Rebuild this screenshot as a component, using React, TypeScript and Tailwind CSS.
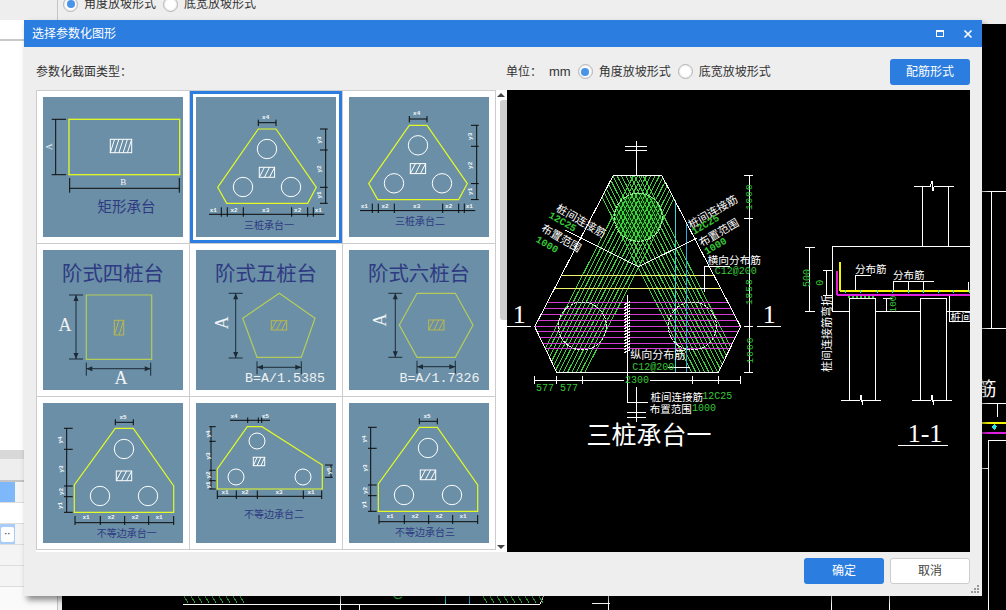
// App.tsx
import type { ReactNode } from "react";

type Seg = [number, number, number, number];

const Lines = ({ segs, stroke = "#fff", width = 1 }: { segs: Seg[]; stroke?: string; width?: number }) => (
	<g stroke={stroke} strokeWidth={width} fill="none">
		{segs.map(([x1, y1, x2, y2], i) => (
			<line key={i} x1={x1} y1={y1} x2={x2} y2={y2} />
		))}
	</g>
);

interface TxtProps {
	x: number;
	y: number;
	size: number;
	fill?: string;
	rotate?: number;
	mono?: boolean;
	serif?: boolean;
	bold?: boolean;
	spacing?: number;
	children: ReactNode;
}

const Txt = ({ x, y, size, fill = "#fff", rotate = 0, mono, serif, bold, spacing, children }: TxtProps) => (
	<text
		x={x}
		y={y}
		fontSize={size}
		fill={fill}
		textAnchor="middle"
		dominantBaseline="central"
		letterSpacing={spacing}
		fontWeight={bold ? 700 : 400}
		fontFamily={
			mono
				? "'Liberation Mono', monospace"
				: serif
					? "'Liberation Serif', 'Noto Sans CJK SC', serif"
					: "'Noto Sans CJK SC', sans-serif"
		}
		transform={rotate ? `rotate(${rotate} ${x} ${y})` : undefined}
	>
		{children}
	</text>
);

const Hatch = ({ x, y, w, h, color = "#fff" }: { x: number; y: number; w: number; h: number; color?: string }) => {
	const n = Math.round(w / 4.5);
	const step = w / n;
	return (
		<g stroke={color} fill="none" strokeWidth={1}>
			<rect x={x} y={y} width={w} height={h} />
			{Array.from({ length: n }, (_, i) => (
				<line key={i} x1={x + i * step} y1={y + h} x2={x + (i + 1) * step} y2={y} />
			))}
		</g>
	);
};

const Thumb = ({ children }: { children: ReactNode }) => (
	<svg viewBox="0 0 140 140" className="block h-[140px] w-[140px] bg-[#6b8fa6]">
		{children}
	</svg>
);

const Lbl = (props: { x: number; y: number; rotate?: number; children: ReactNode }) => (
	<Txt {...props} size={6} mono bold fill="#f4f7f8" />
);

const Title = ({ x, y, size = 10, children }: { x: number; y: number; size?: number; children: ReactNode }) => (
	<Txt x={x} y={y} size={size} fill="#2e3a82">
		{children}
	</Txt>
);

const YELLOW = "#e2fa26";

const RectCap = () => (
	<Thumb>
		<rect x={26} y={22.3} width={110.7} height={55.4} fill="none" stroke={YELLOW} strokeWidth={1.3} />
		<Hatch x={67.3} y={42.3} w={21.4} h={13.4} />
		<Lines
			stroke="#0c0c0c"
			segs={[
				[12.7, 22.3, 12.7, 77.7],
				[8.7, 22.3, 23, 22.3],
				[8.7, 77.7, 23, 77.7],
				[26.7, 91.3, 136.3, 91.3],
				[26.7, 81, 26.7, 95.7],
				[136.3, 81, 136.3, 95.7],
			]}
		/>
		<Txt x={6.3} y={49.7} size={9} rotate={-90} serif fill="#f4f7f8">
			A
		</Txt>
		<Txt x={80.3} y={84.7} size={9} serif fill="#f4f7f8">
			B
		</Txt>
		<Title x={83.5} y={108.7} size={14.5}>
			矩形承台
		</Title>
	</Thumb>
);

// 三桩承台一 / 二 share one drawing, only shifted
const ThreePile = ({ dx, dy, title }: { dx: number; dy: number; title: string }) => (
	<Thumb>
		<g transform={`translate(${dx} ${dy})`}>
			<polygon
				points="62.3,32 80,32 120.3,90.3 111.7,106.3 30.7,106.3 21.7,90.3"
				fill="none"
				stroke={YELLOW}
				strokeWidth={1.2}
			/>
			<g fill="none" stroke="#fff">
				<circle cx={71} cy={52} r={9.7} />
				<circle cx={47} cy={90} r={9.7} />
				<circle cx={95} cy={90} r={9.7} />
			</g>
			<Hatch x={63.3} y={70.3} w={15.3} h={10} />
			<Lines
				stroke="#0c0c0c"
				segs={[
					[62.3, 25.7, 80, 25.7],
					[62.3, 22.7, 62.3, 29],
					[80, 22.7, 80, 29],
					[129.7, 32, 129.7, 106.3],
					[124, 32, 131.7, 32],
					[124, 53, 131.7, 53],
					[124, 90.3, 131.7, 90.3],
					[124, 106.3, 131.7, 106.3],
					[13, 117.3, 128.3, 117.3],
					...[25.3, 31.3, 47.3, 95.7, 111.7, 117.3].map((x): Seg => [x, 110.3, x, 119.7]),
				]}
			/>
			<Lbl x={69.7} y={20.3}>x4</Lbl>
			<Lbl x={123} y={43} rotate={-90}>y3</Lbl>
			<Lbl x={123} y={72} rotate={-90}>y2</Lbl>
			<Lbl x={123} y={98} rotate={-90}>y1</Lbl>
			<Lbl x={17.3} y={113}>x1</Lbl>
			<Lbl x={38} y={113}>x2</Lbl>
			<Lbl x={69.7} y={113}>x3</Lbl>
			<Lbl x={101.7} y={113}>x2</Lbl>
			<Lbl x={122.3} y={113}>x1</Lbl>
			<Title x={73} y={127.3}>{title}</Title>
		</g>
	</Thumb>
);

const Arrow = ({ x, y, dir, color }: { x: number; y: number; dir: "u" | "d" | "l" | "r"; color: string }) => {
	const pts = {
		u: `${x},${y} ${x - 2.5},${y + 6} ${x + 2.5},${y + 6}`,
		d: `${x},${y} ${x - 2.5},${y - 6} ${x + 2.5},${y - 6}`,
		l: `${x},${y} ${x + 6},${y - 2.5} ${x + 6},${y + 2.5}`,
		r: `${x},${y} ${x - 6},${y - 2.5} ${x - 6},${y + 2.5}`,
	}[dir];
	return <polygon points={pts} fill={color} />;
};

const DIM = "#1d2b38";
const PALE = "#b3cc5c";
const HATCH_Y = "#b9b84f";

const PlainShape = ({
	title,
	points,
	hatch,
	v,
	h,
	a,
	formula,
}: {
	title: string;
	points: string;
	hatch: [number, number, number, number];
	v: { x: number; y1: number; y2: number };
	h: { y: number; x1: number; x2: number };
	a: { x: number; y: number; rotate?: number };
	formula?: { x: number; y: number; text: string };
}) => (
	<Thumb>
		<Title x={70} y={21.7} size={20.4}>
			{title}
		</Title>
		<polygon points={points} fill="none" stroke={PALE} strokeWidth={1.2} />
		<Hatch x={hatch[0]} y={hatch[1]} w={hatch[2]} h={hatch[3]} color={HATCH_Y} />
		<Lines
			stroke={DIM}
			segs={[
				[v.x, v.y1, v.x, v.y2],
				[v.x - 7, v.y1, v.x + 7, v.y1],
				[v.x - 7, v.y2, v.x + 7, v.y2],
				[h.x1, h.y, h.x2, h.y],
				[h.x1, h.y - 6, h.x1, h.y + 7],
				[h.x2, h.y - 6, h.x2, h.y + 7],
			]}
		/>
		<Arrow x={v.x} y={v.y1} dir="u" color={DIM} />
		<Arrow x={v.x} y={v.y2} dir="d" color={DIM} />
		<Arrow x={h.x1} y={h.y} dir="l" color={DIM} />
		<Arrow x={h.x2} y={h.y} dir="r" color={DIM} />
		<Txt x={a.x} y={a.y} size={18} serif rotate={a.rotate} fill="#f1f4f6">
			A
		</Txt>
		{formula ? (
			<Txt x={formula.x} y={formula.y} size={13.3} mono fill="#eef2f5">
				{formula.text}
			</Txt>
		) : (
			<Txt x={78} y={128.3} size={18} serif fill="#f1f4f6">
				A
			</Txt>
		)}
	</Thumb>
);

const UnequalA = ({ dx, dy, title, tx, ty }: { dx: number; dy: number; title: string; tx: number; ty: number }) => (
	<Thumb>
		<g transform={`translate(${dx} ${dy})`}>
			<polygon
				points="72.3,25.3 90.3,25.3 130.7,83 130.7,109.3 31.3,109.3 31.3,82"
				fill="none"
				stroke={YELLOW}
				strokeWidth={1.2}
			/>
			<g fill="none" stroke="#fff">
				<circle cx={81} cy={46} r={9.7} />
				<circle cx={57} cy={93} r={9.7} />
				<circle cx={105} cy={93} r={9.7} />
			</g>
			<Hatch x={73.3} y={68} w={15.4} h={9.7} />
			<Lines
				stroke="#0c0c0c"
				segs={[
					[23.7, 25.3, 23.7, 109.3],
					...[25.3, 46.3, 83, 93.7, 109.3].map((y): Seg => [21, y, 29.7, y]),
					[72.3, 19.3, 90.3, 19.3],
					[72.3, 16.3, 72.3, 22.3],
					[90.3, 16.3, 90.3, 22.3],
					[32, 119.7, 130.7, 119.7],
					...[32, 57.3, 81.7, 105.7, 130.7].map((x): Seg => [x, 113, x, 122]),
				]}
			/>
			<Lbl x={80} y={14.7}>x5</Lbl>
			<Lbl x={17.3} y={37} rotate={-90}>y4</Lbl>
			<Lbl x={18} y={66} rotate={-90}>y3</Lbl>
			<Lbl x={18} y={88.5} rotate={-90}>y2</Lbl>
			<Lbl x={17.3} y={102.5} rotate={-90}>y1</Lbl>
			<Lbl x={43} y={114.7}>x1</Lbl>
			<Lbl x={68} y={114.7}>x2</Lbl>
			<Lbl x={92} y={114.7}>x2</Lbl>
			<Lbl x={116} y={114.7}>x1</Lbl>
		</g>
		<Title x={tx} y={ty}>{title}</Title>
	</Thumb>
);

const UnequalB = () => (
	<Thumb>
		<polygon
			points="51.3,23.7 66,23.7 126.3,62 126.3,86 21.3,86 21.3,66"
			fill="none"
			stroke={YELLOW}
			strokeWidth={1.2}
		/>
		<g fill="none" stroke="#fff">
			<circle cx={61} cy={38} r={8} />
			<circle cx={40} cy={74} r={8} />
			<circle cx={107} cy={74} r={8} />
		</g>
		<Hatch x={57.3} y={54.3} w={11.4} h={8.4} />
		<Lines
			stroke="#0c0c0c"
			segs={[
				[15, 23.7, 15, 86],
				...[23.7, 38.3, 67.3, 77.7, 86].map((y): Seg => [13.3, y, 19.7, y]),
				[34, 17.3, 74, 17.3],
				...[51.7, 62.3, 65.7].map((x): Seg => [x, 14.5, x, 20]),
				[135, 62, 135, 74.3],
				[129, 62, 136.7, 62],
				[129, 74.3, 136.7, 74.3],
				[21.3, 93.3, 125.7, 93.3],
				...[21.3, 40.3, 61.3, 107.3, 125.7].map((x): Seg => [x, 87.5, x, 96]),
			]}
		/>
		<Lbl x={38} y={13}>x4</Lbl>
		<Lbl x={69.3} y={13}>x5</Lbl>
		<Lbl x={133} y={68} rotate={-90}>y5</Lbl>
		<Lbl x={12} y={31} rotate={-90}>y4</Lbl>
		<Lbl x={12} y={53} rotate={-90}>y3</Lbl>
		<Lbl x={12} y={72} rotate={-90}>y2</Lbl>
		<Lbl x={12} y={82} rotate={-90}>y1</Lbl>
		<Lbl x={29} y={89.3}>x1</Lbl>
		<Lbl x={49} y={89.3}>x2</Lbl>
		<Lbl x={83} y={89.3}>x3</Lbl>
		<Lbl x={115} y={89.3}>x1</Lbl>
		<Title x={78} y={110.3}>不等边承台二</Title>
	</Thumb>
);

const thumbs: { id: string; node: ReactNode; selected?: boolean }[] = [
	{ id: "rect", node: <RectCap /> },
	{ id: "three1", node: <ThreePile dx={0} dy={0} title="三桩承台一" />, selected: true },
	{ id: "three2", node: <ThreePile dx={-2} dy={-3.7} title="三桩承台二" /> },
	{
		id: "four",
		node: (
			<PlainShape
				title="阶式四桩台"
				points="43.3,45 108.7,45 108.7,109.3 43.3,109.3"
				hatch={[71.3, 70.3, 9.4, 14.7]}
				v={{ x: 33, y1: 45, y2: 109 }}
				h={{ y: 118.7, x1: 43.3, x2: 107.7 }}
				a={{ x: 22, y: 74.7 }}
			/>
		),
	},
	{
		id: "five",
		node: (
			<PlainShape
				title="阶式五桩台"
				points="83.3,43.3 119,68.3 105.3,107.3 61,107.3 46.7,68.3"
				hatch={[75.3, 70.7, 15.4, 9.3]}
				v={{ x: 39.7, y1: 43.3, y2: 108 }}
				h={{ y: 117.3, x1: 61, x2: 105.3 }}
				a={{ x: 25.7, y: 72.7, rotate: -90 }}
				formula={{ x: 89, y: 128, text: "B=A/1.5385" }}
			/>
		),
	},
	{
		id: "six",
		node: (
			<PlainShape
				title="阶式六桩台"
				points="68,43.3 106.3,43.3 124,75 106.3,107.3 68,107.3 50.3,75"
				hatch={[79.7, 70, 15.3, 10]}
				v={{ x: 46.3, y1: 43.3, y2: 107.3 }}
				h={{ y: 116.7, x1: 68, x2: 106.3 }}
				a={{ x: 31, y: 70, rotate: -90 }}
				formula={{ x: 90.5, y: 128, text: "B=A/1.7326" }}
			/>
		),
	},
	{ id: "un1", node: <UnequalA dx={0} dy={0} title="不等边承台一" tx={83.7} ty={129.3} /> },
	{ id: "un2", node: <UnequalB /> },
	{ id: "un3", node: <UnequalA dx={-2} dy={-1} title="不等边承台三" tx={76} ty={128.7} /> },
];

const HEX = "613.3,175.3 661.7,175.3 740.7,326.7 718.3,372.3 556.7,372.3 534.7,326.7";
const offsets = Array.from({ length: 13 }, (_, i) => -26 + i * 4.33);
const bandB = offsets.map((k): Seg => [638.3 + k + 0.512 * 43, 174, 638.3 + k - 0.512 * 156, 373.3]);
const bandA = offsets.map((k): Seg => [638.3 + k - 0.512 * 43, 174, 638.3 + k + 0.512 * 156, 373.3]);
const magenta = [302.7, 308.3, 314, 320, 326, 331.7, 337.3, 343.3, 348.7].map((y): Seg => [530, y, 745, y]);
const zig = Array.from({ length: 17 }, (_, i): Seg => [624.5, 303 + i * 3 + 1.5, 630.5, 303 + i * 3 - 1.5]);

const GREEN = "#38c838";
const HATCH_GREEN = "#3fd23f";

const CadDrawing = () => (
	<svg viewBox="507 90 463 462" className="block h-[462px] w-[463px] bg-black">
		<defs>
			<clipPath id="hex">
				<polygon points={HEX} />
			</clipPath>
		</defs>
		<g shapeRendering="crispEdges">
			<g clipPath="url(#hex)">
				<Lines stroke={HATCH_GREEN} segs={bandB} />
				<Lines stroke={HATCH_GREEN} segs={bandA} />
				<circle cx={638.3} cy={217.3} r={24} fill="#2ed02e" fillOpacity={0.22} />
				<Lines stroke="#d43cd4" segs={magenta} />
			</g>
			<Lines
				stroke="#f4f46c"
				segs={[
					[561, 275.3, 713.6, 275.3],
					[554, 288.3, 721, 288.3],
				]}
			/>
			<Lines stroke="#30d8d8" segs={[[675.3, 200, 675.3, 372]]} />
			<Lines stroke="#2aa8e0" segs={[[686.7, 221.7, 686.7, 372]]} />
			<Lines
				segs={[
					[636.3, 141, 636.3, 175.3],
					[625, 146.7, 647, 146.7],
					[625, 150.7, 647, 150.7],
					[627.3, 295, 627.3, 402.3],
					[627.3, 402.3, 648.3, 402.3],
					[636.7, 386.7, 636.7, 421.7],
					[627, 412.7, 646, 412.7],
					[627, 417.7, 646, 417.7],
					[556.7, 372.3, 718.3, 372.3],
					[565, 230, 638.3, 266.7],
					[638.3, 266.7, 696.7, 238.3],
					[704, 266, 730, 266],
					[704, 266, 704, 291.7],
					[700, 275.3, 708, 275.3],
					[700, 288.3, 708, 288.3],
					[507, 326, 530.7, 326],
					[756.7, 326, 780.7, 326],
					[749.3, 175, 749.3, 373.3],
					[744.3, 175, 752.7, 175],
					[744.3, 218.7, 752.7, 218.7],
					[744.3, 326, 752.7, 326],
					[744.3, 372.7, 752.7, 372.7],
					[534.3, 380, 624, 380],
					[650, 380, 740.7, 380],
					...[534.3, 556, 582.3, 692.3, 718.3, 740].map((x): Seg => [x, 376, x, 384]),
					[668, 367.7, 690, 367.7],
					...zig,
				]}
			/>
			<polygon points={HEX} fill="none" stroke="#fff" />
			<g fill="none" stroke="#dff5df" strokeDasharray="3 1">
				<circle cx={582.3} cy={326} r={24} />
				<circle cx={692.3} cy={326} r={24} />
				<circle cx={638.3} cy={217.3} r={24} stroke="#9cf09c" />
			</g>

			{/* section 1-1 */}
			<Lines
				segs={[
					[914.3, 186.7, 930, 186.7],
					[934, 186.7, 954, 186.7],
					[930, 186.7, 932, 181],
					[932, 181, 933, 191],
					[933, 191, 934, 186.7],
					[922.7, 186.7, 922.7, 246.7],
					[948.7, 186.7, 948.7, 246.7],
					[832.3, 246.7, 970, 246.7],
					[832.3, 246.7, 832.3, 311.7],
					[832.3, 311.7, 849.3, 311.7],
					[875.7, 311.7, 920.7, 311.7],
					[946.7, 311.7, 970, 311.7],
					[805, 247.3, 815, 247.3],
					[805, 311.7, 815, 311.7],
					[809.3, 247.3, 809.3, 311.7],
					[826.7, 270.7, 826.7, 295],
					[823, 270.7, 832, 270.7],
					[823, 295, 832, 295],
					[849.3, 298.3, 875.7, 298.3],
					[849.3, 298.3, 849.3, 400],
					[875.7, 298.3, 875.7, 400],
					[920.7, 298.3, 946.7, 298.3],
					[920.7, 298.3, 920.7, 400],
					[946.7, 298.3, 946.7, 400],
					[841, 400.3, 860, 400.3],
					[863, 400.3, 881, 400.3],
					[860, 400.3, 861, 395],
					[861, 395, 862.5, 405],
					[862.5, 405, 863, 400.3],
					[912.3, 400.3, 931, 400.3],
					[934, 400.3, 952, 400.3],
					[931, 400.3, 932, 395],
					[932, 395, 933.5, 405],
					[933.5, 405, 934, 400.3],
					[855.7, 275, 870.7, 275],
					[855.7, 275, 855.7, 291],
					[893.3, 281.3, 934, 281.3],
					[893.3, 281.3, 893.3, 291],
					[908.3, 281.3, 908.3, 291],
					[923.3, 281.3, 923.3, 291],
					[886.7, 298.3, 886.7, 311.7],
					[883, 298.3, 892, 298.3],
					[883, 311.7, 892, 311.7],
					[949.3, 295, 949.3, 321.7],
					[949.3, 321.7, 970, 321.7],
					[898.3, 445.7, 947.7, 445.7],
					[968, 282, 968, 290],
				]}
			/>
			<Lines
				stroke="#f6f600"
				width={2}
				segs={[
					[840, 261.7, 840, 291],
					[840, 291, 970, 291],
				]}
			/>
			<Lines
				stroke="#e01fe0"
				width={2}
				segs={[
					[837, 271, 837, 294.7],
					[837, 294.7, 970, 294.7],
				]}
			/>
			<Lines
				stroke="#30e0e0"
				segs={[845, 860, 877, 892.5, 908.3, 923.3, 938.3, 953.3, 969].map((x): Seg => [x, 289.5, x, 292.5])}
			/>
			<line x1={848} y1={296.7} x2={876} y2={296.7} stroke={GREEN} strokeDasharray="2 2" strokeWidth={2} />
		</g>

		<Txt x={519.3} y={314} size={26} serif>1</Txt>
		<Txt x={769.3} y={314} size={26} serif>1</Txt>
		<Txt x={750} y={196.7} size={9.5} mono fill={GREEN} rotate={-90} spacing={1}>1000</Txt>
		<Txt x={750} y={291.7} size={9.5} mono fill={GREEN} rotate={-90} spacing={1}>1858</Txt>
		<Txt x={750} y={350} size={9.5} mono fill={GREEN} rotate={-90} spacing={1}>1000</Txt>

		<Txt x={581.7} y={220} size={11} rotate={30}>桩间连接筋</Txt>
		<Txt x={562.3} y={222.3} size={10} mono bold fill={GREEN} rotate={30}>12C25</Txt>
		<Txt x={561.7} y={237.3} size={11} rotate={30}>布置范围</Txt>
		<Txt x={546.7} y={245} size={10} mono bold fill={GREEN} rotate={30}>1000</Txt>
		<Txt x={712.3} y={211} size={11} rotate={-30}>桩间连接筋</Txt>
		<Txt x={705.7} y={225} size={10} mono bold fill={GREEN} rotate={-30}>12C25</Txt>
		<Txt x={718.3} y={231.7} size={11} rotate={-30}>布置范围</Txt>
		<Txt x={715.7} y={246.7} size={10} mono bold fill={GREEN} rotate={-30}>1000</Txt>

		<Txt x={734.3} y={259.3} size={10.7}>横向分布筋</Txt>
		<Txt x={735.7} y={271.7} size={10} mono fill={GREEN}>C12@200</Txt>
		<Txt x={657.7} y={354.3} size={11}>纵向分布筋</Txt>
		<Txt x={653.3} y={367.7} size={10} mono fill={GREEN}>C12@200</Txt>
		<Txt x={637} y={380.3} size={10} mono fill={GREEN}>2300</Txt>
		<Txt x={557} y={388.7} size={10} mono fill={GREEN}>577 577</Txt>
		<Txt x={676.7} y={396} size={10.5}>桩间连接筋</Txt>
		<Txt x={717.3} y={396.7} size={10} mono fill={GREEN}>12C25</Txt>
		<Txt x={670.7} y={408.3} size={10.5}>布置范围</Txt>
		<Txt x={704} y={408.3} size={10} mono fill={GREEN}>1000</Txt>
		<Txt x={649} y={433.3} size={25}>三桩承台一</Txt>

		<Txt x={807.3} y={278} size={10} mono fill={GREEN} rotate={-90}>500</Txt>
		<Txt x={820.7} y={282.7} size={10} mono fill={GREEN} rotate={-90}>0</Txt>
		<Txt x={826} y={333.5} size={11} rotate={-90}>桩间连接筋弯折</Txt>
		<Txt x={870.7} y={268.3} size={10.5}>分布筋</Txt>
		<Txt x={908.7} y={274.3} size={10.5}>分布筋</Txt>
		<Txt x={893.3} y={304} size={9.5} mono fill={GREEN} rotate={-90}>100</Txt>
		<Txt x={961} y={316.5} size={10.5}>桩间</Txt>
		<Txt x={925} y={433} size={26} serif>1-1</Txt>
	</svg>
);

const BackgroundCad = () => (
	<svg viewBox="62 24 944 586" className="block h-full w-full">
		<g shapeRendering="crispEdges">
			<Lines
				segs={[
					[183, 604, 540, 604],
					[540, 604, 544, 595],
					[340, 596, 340, 610],
					[359, 604, 359, 610],
					[592, 603, 610, 603],
					[608, 596, 608, 610],
					[831.7, 596, 831.7, 610],
					[889.3, 596, 889.3, 610],
					[982, 191.7, 1006, 191.7],
					[991.7, 191.7, 991.7, 328.3],
					[982, 328.3, 1006, 328.3],
					[982, 403.3, 1006, 403.3],
					[998, 403.3, 997, 417],
					[988.3, 440.7, 1006, 440.7],
					[988.3, 440.7, 988.3, 610],
					[982, 468.7, 988.3, 468.7],
				]}
			/>
			<Lines
				stroke="#35b835"
				segs={[
					...Array.from({ length: 9 }, (_, i): Seg => [184 + i * 7, 596, 188 + i * 7, 603]),
					...Array.from({ length: 9 }, (_, i): Seg => [483 + i * 7, 596, 487 + i * 7, 603]),
				]}
			/>
			<Lines stroke="#30d8d8" segs={[[445.3, 596, 445.3, 604]]} />
			<Lines stroke="#2aa8e0" segs={[[469, 596, 469, 604]]} />
			<Lines stroke="#f6f600" width={2} segs={[[982, 423, 1006, 423]]} />
			<Lines stroke="#e01fe0" width={2} segs={[[982, 432.7, 1006, 432.7]]} />
			<polygon points="994.3,424 997,426.7 994.3,430 991.6,426.7" fill="#30e0e0" />
		</g>
		<Txt x={987} y={387} size={19}>筋</Txt>
		<Txt x={398} y={590} size={20} mono fill="#38c838">C12@200</Txt>
	</svg>
);

const Radio = ({ checked }: { checked?: boolean }) => (
	<span className="flex h-[15px] w-[15px] items-center justify-center rounded-full border border-[#b4b4b4] bg-white shadow-[inset_0_0_2px_#ccc]">
		{checked && <span className="h-[8px] w-[8px] rounded-full bg-[#4a94e8]" />}
	</span>
);

const SlopeOptions = () => (
	<>
		<Radio checked />
		<span className="ml-[6px]">角度放坡形式</span>
		<span className="ml-[7px]">
			<Radio />
		</span>
		<span className="ml-[6px]">底宽放坡形式</span>
	</>
);

const SidePanel = () => (
	<aside className="flex w-[57px] shrink-0 flex-col bg-white">
		<div className="h-5 bg-[#eee]" />
		<div className="h-[21px] border-b-2 border-[#c9c9c9]" />
		<div className="flex-1" />
		<div className="h-[9px] bg-[#d8d8d8]" />
		<div className="h-[23px] border-b-2 border-[#c4c4c4] bg-[#eee]" />
		<div className="flex h-[21px] border-b border-[#ddd]">
			<div className="w-[15px] bg-[#7fb7fb]" />
			<div className="flex-1 bg-[#f4f4f4]" />
		</div>
		<div className="h-[21px] border-b border-[#ddd]" />
		<div className="flex h-[21px] border-b border-[#ddd]">
			<div className="flex w-[15px] items-center justify-center bg-[#a9cdf8]">
				<span className="flex h-[15px] w-[13px] items-center justify-center rounded-[2px] bg-white text-[9px] font-bold leading-none text-[#555]">
					··
				</span>
			</div>
			<div className="flex-1 bg-[#f4f4f4]" />
		</div>
		<div className="h-[21px] border-b border-[#ddd] bg-[#f4f4f4]" />
		<div className="h-[21px] border-b border-[#ddd] bg-[#f4f4f4]" />
		<div className="h-[23px] bg-[#fafafa]" />
	</aside>
);

const Scrollbar = () => (
	<div className="flex w-[11px] shrink-0 flex-col bg-white">
		<svg viewBox="0 0 11 10" className="block h-[10px] w-[11px]">
			<path d="M1 7 L5 3 L9 7 Z" fill="#444" />
		</svg>
		<div className="ml-[4px] h-[220px] w-[7px] rounded-l-[3px] bg-[#cfcfcf]" />
		<div className="flex-1" />
		<svg viewBox="0 0 11 10" className="block h-[10px] w-[11px]">
			<path d="M1 3 L9 3 L5 7 Z" fill="#444" />
		</svg>
	</div>
);

export default function App() {
	return (
		<div className="relative flex h-[610px] w-[1006px] overflow-hidden bg-white font-['Liberation_Sans','Noto_Sans_CJK_SC',sans-serif] text-[12px] text-[#333]">
			<SidePanel />

			<main className="flex min-w-0 flex-1 flex-col border-l border-[#c4c4c4] bg-[#eee]">
				<div className="h-6 shrink-0 overflow-hidden pl-[5px]">
					<div className="flex h-2 items-center">
						<SlopeOptions />
					</div>
				</div>
				<div className="ml-[4px] min-h-0 flex-1 bg-black">
					<BackgroundCad />
				</div>
			</main>

			{/* dialog */}
			<div className="absolute top-5 left-6 flex h-[576px] w-[958px] flex-col bg-[#eee] shadow-[3px_4px_6px_rgba(0,0,0,0.45)]">
				<div className="flex h-[27px] shrink-0 items-center justify-between bg-[#2b7de0] pr-[9px] pl-2 text-white">
					<span>选择参数化图形</span>
					<div className="flex items-center gap-[19px]">
						<span className="h-[7px] w-[8px] border border-t-2 border-white" />
						<svg viewBox="0 0 10 10" className="h-[10px] w-[10px]" fill="none" stroke="#fff" strokeWidth={1.6}>
							<path d="M1.5 1.5 L8.5 8.5 M8.5 1.5 L1.5 8.5" />
						</svg>
					</div>
				</div>

				<div className="flex h-[43px] shrink-0 items-center px-3 pt-[6px]">
					<span className="w-[470px]">参数化截面类型：</span>
					<span>单位：</span>
					<span className="mx-[7px] text-[13px]">mm</span>
					<SlopeOptions />
					<button className="ml-auto h-[26px] w-20 rounded-[3px] bg-[#2b7de0] text-white">配筋形式</button>
				</div>

				<div className="flex h-[462px] shrink-0 px-3">
					<div className="w-[460px] shrink-0 bg-white">
						<div className="grid grid-cols-[repeat(3,153px)] border-t border-l border-[#ccc]">
							{thumbs.map((t) => (
								<div
									key={t.id}
									className={`flex h-[153px] items-center justify-center border-r border-b border-[#ccc] ${
										t.selected ? "shadow-[inset_0_0_0_3px_#2b7de0]" : ""
									}`}
								>
									{t.node}
								</div>
							))}
						</div>
					</div>
					<Scrollbar />
					<CadDrawing />
				</div>

				<div className="relative flex flex-1 items-start justify-end gap-[6px] px-3 pt-[6px]">
					<button className="h-[26px] w-20 rounded-[3px] bg-[#2b7de0] text-white">确定</button>
					<button className="h-[26px] w-20 rounded-[3px] border border-[#ccc] bg-white text-[#444]">取消</button>
					<svg viewBox="0 0 9 9" className="absolute right-[2px] bottom-[2px] h-[9px] w-[9px]" fill="#999">
						<rect x="6" y="0" width="2" height="2" />
						<rect x="3" y="3" width="2" height="2" />
						<rect x="6" y="3" width="2" height="2" />
						<rect x="0" y="6" width="2" height="2" />
						<rect x="3" y="6" width="2" height="2" />
						<rect x="6" y="6" width="2" height="2" />
					</svg>
				</div>
			</div>
		</div>
	);
}
